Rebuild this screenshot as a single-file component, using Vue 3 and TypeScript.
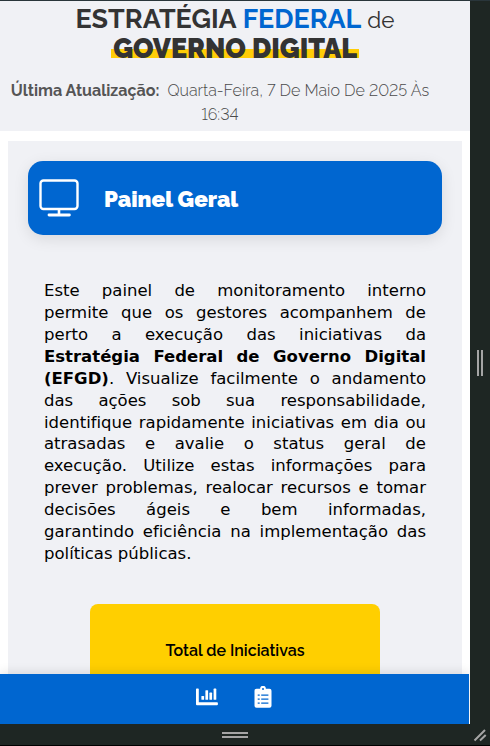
<script setup lang="ts">
interface Bar {
  x: number
  y: number
}

const bars: Bar[] = [
  { x: 5.4, y: 8 },
  { x: 9.4, y: 2.2 },
  { x: 13.4, y: 4.6 },
  { x: 17.6, y: 0.6 },
]
const updatedAt = 'Quarta-Feira, 7 De Maio De 2025 Às'
const updatedTime = '16:34'
</script>

<template>
  <div class="frame">
    <div class="screen">
      <div class="viewport">
        <header class="header">
          <h1 class="title">
            <span class="line"><b class="w1">ESTRATÉGIA</b><b class="w2">FEDERAL</b><span class="w3">de</span></span>
            <span class="line"><b class="mark">GOVERNO DIGITAL</b></span>
          </h1>
          <p class="updated">
            <span class="line"><b class="label">Última Atualização:</b><span class="date">{{ updatedAt }}</span></span>
            <span class="line time">{{ updatedTime }}</span>
          </p>
        </header>
        <main class="card">
          <div class="banner">
            <svg class="monitor" viewBox="0 0 40 38" fill="none" stroke="#fff">
              <rect x="1.5" y="1.5" width="37" height="28.5" rx="3" stroke-width="2.4" />
              <path d="M20 30v5.5" stroke-width="2.6" />
              <path d="M10 36h20.400" stroke-width="2.8" stroke-linecap="round" />
            </svg>
            <h2 class="banner-title">Painel Geral</h2>
          </div>
          <p class="intro">
            Este painel de monitoramento interno permite que os gestores acompanhem de perto a execução das iniciativas da
            <b>Estratégia Federal de Governo Digital (EFGD)</b>. Visualize facilmente o andamento das ações sob sua
            responsabilidade, identifique rapidamente iniciativas em dia ou atrasadas e avalie o status geral de execução.
            Utilize estas informações para prever problemas, realocar recursos e tomar decisões ágeis e bem informadas,
            garantindo&nbsp;eficiência na implementação das políticas públicas.
          </p>
          <div class="total"><span>Total de Iniciativas</span></div>
        </main>
      </div>
      <nav class="nav">
        <svg class="chart" viewBox="0 0 22 18" fill="#fff">
          <path d="M0 1.200Q0 .4.8.4h1.200q.8 0 .8.8v13.100h18.200q.9 0 .9.8v1.200q0 .9-.9.9H1q-1 0-1-1z" />
          <rect v-for="b in bars" :key="b.x" :x="b.x" :y="b.y" width="2.700" :height="11.8 - b.y" rx=".6" />
        </svg>
        <svg class="clip" viewBox="0 0 18 22">
          <path fill="#fff" d="M2.500 2.700h3.600a2.900 2.900 0 0 1 5.800 0h3.600q2 0 2 2v15q0 2-2 2h-13q-2 0-2-2v-15q0-2 2-2z" />
          <circle cx="9" cy="3" r="1" fill="#0066d0" />
          <path stroke="#0066d0" stroke-width="1.200" d="M3.700 9.200h2M7.200 9.200h7.200M3.700 13.200h2M7.200 13.200h7.200M3.700 17.200h2M7.200 17.200h7.200" />
        </svg>
      </nav>
    </div>
    <div class="side"><i class="grip vertical"></i></div>
    <div class="bottom"><i class="grip horizontal"></i></div>
    <div class="corner">
      <svg viewBox="0 0 14 14" fill="none" stroke="#a5a5a5" stroke-width="2">
        <path d="M1.500 12.500 12 2M7 12.500 12.700 7" />
      </svg>
    </div>
  </div>
</template>

<style>
body {
  margin: 0;
}
</style>

<style scoped>
.frame {
  box-sizing: border-box;
  width: 490px;
  height: 746px;
  display: grid;
  grid-template-columns: 470px 20px;
  grid-template-rows: 723px 21px;
  background: #1e2623;
  border-top: 1px solid #29353a;
  border-bottom: 1px solid #000;
  overflow: hidden;
  font-family: Raleway, Lato, sans-serif;
  font-variant-numeric: lining-nums;
}
.screen {
  display: flex;
  flex-direction: column;
  background: #fff;
  overflow: hidden;
}
.viewport {
  height: 673px;
  overflow: hidden;
}
.header {
  height: 130px;
  background: #f0f1f5;
  box-sizing: border-box;
  padding-top: 3px;
}
.title {
  margin: 0;
  font-size: 26.900px;
  line-height: 30px;
  color: #333;
}
.line {
  display: flex;
  justify-content: center;
  align-items: baseline;
  white-space: nowrap;
}
.title .line {
  height: 30px;
}
.w1,
.w2 {
  font-weight: 700;
}
.w2 {
  color: #0066d0;
  margin: 0 6px;
}
.w3 {
  font-size: 22.500px;
  font-weight: 400;
}
.mark {
  font-weight: 900;
  padding: 0 2px;
  background: linear-gradient(#ffcd07, #ffcd07) 0 15px / 100% 9px no-repeat;
}
.updated {
  margin: 15px 0 0;
  padding-right: 30px;
  font-size: 16.060px;
  line-height: 24px;
  color: #4a4a4a;
  font-weight: 300;
}
.label {
  color: #555;
  font-weight: 700;
  margin-right: 8px;
}
.card {
  box-sizing: border-box;
  width: 454px;
  height: 600px;
  margin: 10px 8px 0;
  padding: 20px;
  background: #f0f1f5;
}
.banner {
  display: flex;
  align-items: center;
  height: 74px;
  border-radius: 15px;
  background: #0066d0;
  color: #fff;
  box-shadow: 0 4px 15px rgba(0, 0, 0, 0.1);
}
.monitor {
  width: 40px;
  height: 38px;
  margin-left: 11px;
}
.banner-title {
  margin: 2px 0 0 25px;
  font-size: 22.400px;
  font-weight: 900;
}
.intro {
  margin: 45px 16px 0;
  font-family: Verdana, "DejaVu Sans", sans-serif;
  font-size: 16.500px;
  line-height: 21.920px;
  text-align: justify;
  font-variant-ligatures: none;
  color: #000;
}
.total {
  width: 290px;
  height: 160px;
  margin: 39px auto 0;
  padding-top: 35px;
  box-sizing: border-box;
  border-radius: 8px;
  background: #ffcf00;
  text-align: center;
  font-size: 16px;
  line-height: 24px;
  font-weight: 600;
  color: #000;
}
.nav {
  position: relative;
  width: 469px;
  height: 50px;
  box-sizing: border-box;
  padding: 12px 0 0 196px;
  display: flex;
  align-items: flex-start;
  gap: 36px;
  background: #0066d0;
  box-shadow: 0 -2px 10px rgba(0, 0, 0, 0.1);
}
.chart {
  width: 22px;
  height: 18px;
  margin-top: 2px;
}
.clip {
  width: 18px;
  height: 22px;
}
.side,
.bottom,
.corner {
  display: flex;
  align-items: center;
  justify-content: center;
}
.grip {
  box-sizing: border-box;
}
.vertical {
  width: 6px;
  height: 26px;
  border: solid #a5a5a5;
  border-width: 0 2px;
}
.horizontal {
  width: 26px;
  height: 6px;
  border: solid #a5a5a5;
  border-width: 2px 0;
}
.corner svg {
  width: 14px;
  height: 14px;
}
</style>
